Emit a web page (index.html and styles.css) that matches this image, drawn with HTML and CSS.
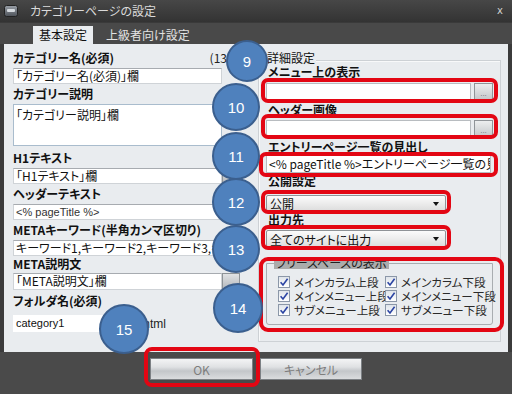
FILE: index.html
```html
<!DOCTYPE html>
<html lang="ja">
<head>
<meta charset="utf-8">
<title>カテゴリーページの設定</title>
<link rel="stylesheet" href="styles.css">
</head>
<body>
<div class="window">
  <div class="titlebar">
    <svg class="app-icon" viewBox="0 0 14 12" width="14" height="12">
      <defs>
        <linearGradient id="ig" x1="0" y1="0" x2="0" y2="1">
          <stop offset="0" stop-color="#9aa0a8"/>
          <stop offset="1" stop-color="#4c5158"/>
        </linearGradient>
      </defs>
      <rect x="0.5" y="0.5" width="13" height="11" rx="2" fill="url(#ig)" stroke="#222"/>
      <rect x="3" y="4" width="8" height="3" rx="1" fill="#d6dbe0"/>
    </svg>
    <span class="title">カテゴリーページの設定</span>
    <span class="close">x</span>
  </div>
  <div class="tabs">
    <div class="tab active">基本設定</div>
    <div class="tab">上級者向け設定</div>
  </div>
  <div class="panel">
    <div class="col-left">
      <div class="label-row"><span class="label">カテゴリー名(必須)</span><span class="counter">(13</span></div>
      <div class="input">「カテゴリー名(必須)」欄</div>
      <div class="label">カテゴリー説明</div>
      <div class="textarea">「カテゴリー説明」欄</div>
      <div class="label">H1テキスト</div>
      <div class="field-row"><div class="input">「H1テキスト」欄</div><div class="side-btn"></div></div>
      <div class="label">ヘッダーテキスト</div>
      <div class="input input-light">&lt;% pageTitle %&gt;</div>
      <div class="label">METAキーワード(半角カンマ区切り)</div>
      <div class="input input-kw">キーワード1,キーワード2,キーワード3,キーワード4</div>
      <div class="label label-meta">META説明文</div>
      <div class="field-row row-meta"><div class="input input-meta">「META説明文」欄</div><div class="side-btn side-meta"></div></div>
      <div class="label">フォルダ名(必須)</div>
      <div class="folder-row"><div class="input input-folder">category1</div><span class="ext">.html</span></div>
    </div>
    <div class="col-right">
      <div class="group">
        <div class="group-title">詳細設定</div>
        <div class="rlabel">メニュー上の表示</div>
        <div class="rfield r1"><div class="rinput"></div><div class="dots-btn">...</div></div>
        <div class="rlabel r2l">ヘッダー画像</div>
        <div class="rfield r2"><div class="rinput"></div><div class="dots-btn">...</div></div>
        <div class="rlabel r3l">エントリーページ一覧の見出し</div>
        <div class="rinput wide">&lt;% pageTitle %&gt;エントリーページ一覧の見出し</div>
        <div class="rlabel r4l">公開設定</div>
        <div class="select s1"><span>公開</span><span class="arrow"></span></div>
        <div class="rlabel r5l">出力先</div>
        <div class="select s2"><span>全てのサイトに出力</span><span class="arrow"></span></div>
        <div class="free">
          <div class="free-title">フリースペースの表示</div>
          <div class="checks">
            <label class="check"><span class="box"><svg viewBox="0 0 10 10" width="10" height="10"><path d="M1.6 5.2 L4 8 L8.6 1.8" fill="none" stroke="#2b44a3" stroke-width="1.6"/></svg></span>メインカラム上段</label>
            <label class="check"><span class="box"><svg viewBox="0 0 10 10" width="10" height="10"><path d="M1.6 5.2 L4 8 L8.6 1.8" fill="none" stroke="#2b44a3" stroke-width="1.6"/></svg></span>メインカラム下段</label>
            <label class="check"><span class="box"><svg viewBox="0 0 10 10" width="10" height="10"><path d="M1.6 5.2 L4 8 L8.6 1.8" fill="none" stroke="#2b44a3" stroke-width="1.6"/></svg></span>メインメニュー上段</label>
            <label class="check"><span class="box"><svg viewBox="0 0 10 10" width="10" height="10"><path d="M1.6 5.2 L4 8 L8.6 1.8" fill="none" stroke="#2b44a3" stroke-width="1.6"/></svg></span>メインメニュー下段</label>
            <label class="check"><span class="box"><svg viewBox="0 0 10 10" width="10" height="10"><path d="M1.6 5.2 L4 8 L8.6 1.8" fill="none" stroke="#2b44a3" stroke-width="1.6"/></svg></span>サブメニュー上段</label>
            <label class="check"><span class="box"><svg viewBox="0 0 10 10" width="10" height="10"><path d="M1.6 5.2 L4 8 L8.6 1.8" fill="none" stroke="#2b44a3" stroke-width="1.6"/></svg></span>サブメニュー下段</label>
          </div>
        </div>
      </div>
    </div>
  </div>
  <div class="footer">
    <button class="btn btn-ok">OK</button>
    <button class="btn btn-cancel">キャンセル</button>
  </div>

  <div class="marks">
    <div class="ring ring-1"></div>
    <div class="ring ring-2"></div>
    <div class="ring ring-3"></div>
    <div class="ring ring-4"></div>
    <div class="ring ring-5"></div>
    <div class="ring ring-6"></div>
    <div class="ring ring-7"></div>
    <div class="badge b9">9</div>
    <div class="badge b10">10</div>
    <div class="badge b11">11</div>
    <div class="badge b12">12</div>
    <div class="badge b13">13</div>
    <div class="badge b14">14</div>
    <div class="badge b15">15</div>
  </div>
</div>
</body>
</html>
```
FILE: styles.css
```css
html, body {
  margin: 0;
  padding: 0;
  background: #3a3a3a;
}

.window {
  position: relative;
  width: 512px;
  height: 394px;
  overflow: hidden;
  display: flex;
  flex-direction: column;
  background: #3b3b3b;
  font-family: "Noto Sans CJK JP", "Noto Sans", sans-serif;
  font-feature-settings: "palt";
  color: #111;
}

/* title bar */
.titlebar {
  height: 22px;
  flex: none;
  display: flex;
  align-items: center;
  padding: 0 9px 0 4px;
  background: linear-gradient(#474747, #333333);
  color: #dadada;
}
.app-icon {
  flex: none;
  margin-right: 12px;
}
.title {
  flex: 1;
  font-size: 12px;
  line-height: 22px;
}
.close {
  font-family: "DejaVu Sans", sans-serif;
  font-size: 10px;
  color: #cfcfcf;
  line-height: 22px;
}

/* tabs */
.tabs {
  height: 22px;
  flex: none;
  display: flex;
  align-items: flex-end;
  padding-left: 33px;
  background: #494949;
  border-top: 1px solid #3a3a3a;
  box-sizing: border-box;
}
.tab {
  height: 18px;
  line-height: 18px;
  font-size: 12px;
  color: #e2e2e2;
  padding: 0 0 0 13px;
}
.tab.active {
  width: 60px;
  box-sizing: border-box;
  padding: 0;
  text-align: center;
  background: #e9ecef;
  color: #111;
}

/* panel */
.panel {
  height: 308px;
  flex: none;
  margin: 0 4px;
  background: #e9ecef;
  display: flex;
}
.col-left {
  width: 254px;
  flex: none;
  box-sizing: border-box;
  padding: 6px 0 0 9px;
  display: flex;
  flex-direction: column;
}
.label-row {
  display: flex;
  justify-content: space-between;
  width: 214px;
}
.label {
  font-size: 12px;
  font-weight: bold;
  line-height: 16px;
  height: 16px;
  white-space: nowrap;
}
.counter {
  font-size: 12px;
  line-height: 16px;
  color: #222;
}
.input {
  width: 209px;
  height: 16px;
  box-sizing: border-box;
  margin: 2px 0;
  padding-left: 2px;
  background: #fff;
  border: 1px solid #cfd3d7;
  border-top-color: #a7abb0;
  font-size: 12px;
  line-height: 14px;
  white-space: nowrap;
  overflow: hidden;
  color: #111;
}
.input-light {
  font-family: "Liberation Sans", sans-serif;
  font-size: 11px;
  color: #333;
}
.input-kw {
  margin-bottom: 0;
}
.label-meta {
  height: 17px;
}
.field-row {
  display: flex;
  align-items: flex-start;
}
.side-btn {
  width: 18px;
  height: 16px;
  margin-top: 2px;
  box-sizing: border-box;
  border: 1px solid #8e9397;
  background: linear-gradient(#e0e2e4, #b4b8bc);
}
.row-meta .input-meta,
.row-meta .side-meta {
  height: 17px;
  margin-top: 0;
  margin-bottom: 3px;
}
.textarea {
  width: 209px;
  height: 42px;
  box-sizing: border-box;
  margin: 2px 0 4px;
  padding: 2px 2px;
  background: #fff;
  border: 1px solid #a9bccd;
  font-size: 12px;
  line-height: 16px;
}
.folder-row {
  display: flex;
  align-items: center;
  margin-top: 6px;
}
.input-folder {
  width: 110px;
  height: 17px;
  margin: 0;
  font-family: "Liberation Sans", sans-serif;
  font-size: 11px;
  line-height: 15px;
  border-color: #fff;
}
.ext {
  margin-left: 17px;
  font-family: "Liberation Sans", sans-serif;
  font-size: 12px;
  color: #222;
}

/* right side */
.col-right {
  flex: 1;
  padding-top: 16px;
}
.group {
  width: 243px;
  height: 282px;
  box-sizing: border-box;
  border: 1px solid #cdd1d5;
  box-shadow: inset 1px 1px 0 #f8f9fa;
  padding-left: 7px;
  display: flex;
  flex-direction: column;
  align-items: flex-start;
}
.group-title {
  margin: -10px 0 0 0;
  padding: 0 1px;
  font-size: 12px;
  line-height: 14px;
  height: 14px;
  background: #e9ecef;
}
.rlabel {
  margin-left: 2px;
  font-size: 12px;
  font-weight: bold;
  line-height: 14px;
  height: 14px;
  white-space: nowrap;
}
.rfield {
  display: flex;
  gap: 3px;
  margin-top: 4px;
}
.r2 {
  margin-top: 3px;
}
.r2l {
  margin-top: 2px;
}
.r3l {
  margin-top: 2px;
}
.r4l {
  margin-top: 1px;
}
.r5l {
  margin-top: 1px;
}
.rinput {
  width: 205px;
  height: 18px;
  box-sizing: border-box;
  background: #fff;
  border: 1px solid #b8bcc0;
  font-size: 12px;
  line-height: 16px;
  white-space: nowrap;
  overflow: hidden;
}
.rinput.wide {
  width: 225px;
  margin-top: 1px;
  padding-left: 2px;
  font-size: 12px;
}
.dots-btn {
  width: 19px;
  height: 18px;
  box-sizing: border-box;
  border: 1px solid #8f9498;
  background: linear-gradient(#eceeef, #c3c6c9);
  font-family: "Liberation Sans", sans-serif;
  font-size: 8px;
  line-height: 20px;
  text-align: center;
  color: #6e7276;
}
.select {
  width: 180px;
  height: 17px;
  box-sizing: border-box;
  margin-top: 7px;
  padding: 0 6px 0 3px;
  display: flex;
  align-items: center;
  justify-content: space-between;
  border: 1px solid #8f9397;
  border-radius: 2px;
  background: linear-gradient(#fbfbfb, #ececec 50%, #dcdcdc);
  font-size: 12px;
  line-height: 15px;
}
.select.s2 {
  height: 18px;
  margin-top: 3px;
}
.arrow {
  width: 0;
  height: 0;
  border-top: 4px solid #111;
  border-left: 3.5px solid transparent;
  border-right: 3.5px solid transparent;
}
.free {
  width: 227px;
  height: 62px;
  box-sizing: border-box;
  margin-top: 15px;
  border: 1px solid #a9adb1;
  border-radius: 0 0 3px 3px;
  padding-left: 11px;
  display: flex;
  flex-direction: column;
  align-items: flex-start;
}
.free-title {
  margin: -7px 0 0 -4px;
  padding: 0 2px;
  height: 12px;
  line-height: 12px;
  font-size: 12px;
  background: #ababab;
  color: #222;
  white-space: nowrap;
}
.checks {
  margin-top: 6px;
  display: grid;
  grid-template-columns: 107px 100px;
  grid-auto-rows: 14px;
}
.check {
  display: flex;
  align-items: center;
  font-size: 11.5px;
  line-height: 14px;
  color: #2a2a2a;
  white-space: nowrap;
}
.box {
  width: 12px;
  height: 12px;
  box-sizing: border-box;
  flex: none;
  margin-right: 4px;
  border: 1px solid #8b97a8;
  background: linear-gradient(#dfe4ea, #ffffff);
  display: flex;
  align-items: center;
  justify-content: center;
}

/* footer */
.footer {
  flex: none;
  height: 42px;
  box-sizing: border-box;
  padding-top: 6px;
  display: flex;
  justify-content: center;
  align-items: flex-start;
  gap: 7px;
  background: #4a4a4a;
}
.btn {
  height: 22px;
  margin: 0;
  padding: 0;
  border: 1px solid #7c8084;
  background: linear-gradient(#f3f4f5, #dfe1e3 40%, #c3c6c9 60%, #dadcde);
  font-family: "Noto Sans CJK JP", sans-serif;
  font-feature-settings: "palt";
  font-size: 12px;
  color: #7d7d7d;
}
.btn-ok {
  width: 103px;
}
.btn-cancel {
  width: 102px;
}

/* annotation overlay */
.marks {
  position: absolute;
  inset: 0;
  pointer-events: none;
}
.ring {
  position: absolute;
  box-sizing: border-box;
  border: 4px solid #e30613;
  border-radius: 7px;
}
.ring-1 { left: 261px; top: 78px; width: 237px; height: 25px; }
.ring-2 { left: 261px; top: 114px; width: 237px; height: 25px; }
.ring-3 { left: 259px; top: 152px; width: 239px; height: 25px; }
.ring-4 { left: 261px; top: 190px; width: 190px; height: 24px; }
.ring-5 { left: 261px; top: 225px; width: 190px; height: 25px; }
.ring-6 { left: 259px; top: 257px; width: 245px; height: 75px; border-radius: 9px; }
.ring-7 { left: 144px; top: 347px; width: 116px; height: 40px; border-radius: 8px; }

.badge {
  position: absolute;
  box-sizing: border-box;
  border-radius: 50%;
  border: 2px solid #3b5f8e;
  background: #4f81bd;
  color: #fff;
  font-family: "Liberation Sans", sans-serif;
  font-size: 15px;
  display: flex;
  align-items: center;
  justify-content: center;
}
.b9 { left: 226px; top: 40px; width: 42px; height: 42px; }
.b10 { left: 212px; top: 83px; width: 48px; height: 48px; }
.b11 { left: 212px; top: 132px; width: 48px; height: 48px; }
.b12 { left: 212px; top: 178px; width: 48px; height: 48px; }
.b13 { left: 212px; top: 225px; width: 48px; height: 48px; }
.b14 { left: 213px; top: 283px; width: 50px; height: 50px; }
.b15 { left: 99px; top: 304px; width: 50px; height: 50px; }
```
